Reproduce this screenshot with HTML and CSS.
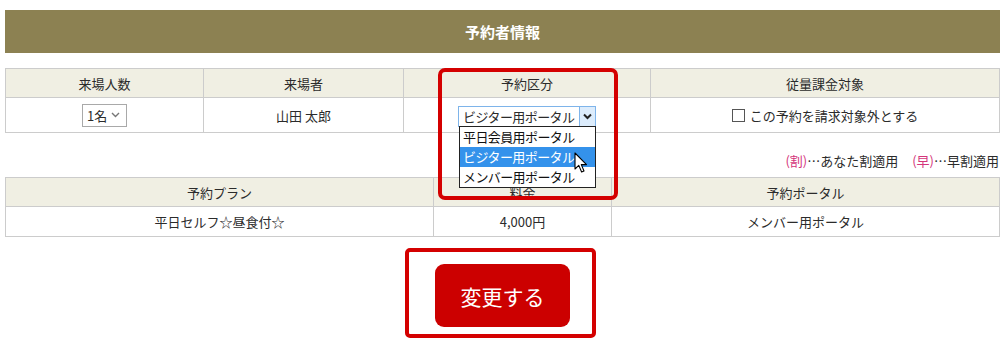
FILE: index.html
```html
<!DOCTYPE html>
<html lang="ja">
<head>
    <meta charset="UTF-8">
    <meta name="viewport" content="width=device-width, initial-scale=1.0">
    <title>予約者情報</title>
    <link rel="stylesheet" href="styles.css">
</head>
<body>
    <div class="page">
        <h2 class="section-title">予約者情報</h2>
        <div class="area">
            <table class="grid info">
                <tr>
                    <th class="c1">来場人数</th>
                    <th class="c2">来場者</th>
                    <th class="c3">予約区分</th>
                    <th>従量課金対象</th>
                </tr>
                <tr class="row-tall">
                    <td><span class="pick small">1名<svg class="chev" width="9" height="6" viewBox="0 0 9 6"><path d="M1 1 L4.5 4.5 L8 1" fill="none" stroke="#777" stroke-width="1.4"/></svg></span></td>
                    <td>山田 太郎</td>
                    <td><span class="pick open"><span class="pick-text">ビジター用ポータル</span><span class="pick-btn"><svg width="9" height="7" viewBox="0 0 9 7"><path d="M1 1.5 L4.5 5 L8 1.5" fill="none" stroke="#222" stroke-width="2"/></svg></span></span></td>
                    <td><span class="check"></span>この予約を請求対象外とする</td>
                </tr>
            </table>
            <p class="legend"><span class="mark-pink">(割)</span>…あなた割適用<span class="gap"></span><span class="mark-pink">(早)</span>…早割適用</p>
            <table class="grid plan">
                <tr>
                    <th class="p1">予約プラン</th>
                    <th class="p2">料金</th>
                    <th>予約ポータル</th>
                </tr>
                <tr>
                    <td>平日セルフ☆昼食付☆</td>
                    <td>4,000円</td>
                    <td>メンバー用ポータル</td>
                </tr>
            </table>

            <ul class="dropdown">
                <li>平日会員用ポータル</li>
                <li class="active">ビジター用ポータル</li>
                <li>メンバー用ポータル</li>
            </ul>
            <svg class="cursor" width="14" height="22" viewBox="0 0 14 22">
                <path d="M1 1 L1 17 L4.8 13.4 L7.6 20 L10 19 L7.3 12.6 L12.5 12.6 Z" fill="#fff" stroke="#000" stroke-width="1.1" stroke-linejoin="round"/>
            </svg>
            <div class="highlight"></div>
        </div>
        <div class="actions">
            <div class="callout">
                <button type="button" class="submit">変更する</button>
            </div>
        </div>
    </div>
</body>
</html>
```

FILE: styles.css
```css
body{
    margin:0;
    background:#fff;
    font-family:"Noto Sans CJK JP", "Noto Sans", sans-serif;
    font-size:13px;
    color:#2b2b2b;
}
.page{
    padding:10px 5px 0 5px;
}
.section-title{
    margin:0;
    height:43px;
    line-height:43px;
    background-color:#8c8152;
    color:#fff;
    font-size:15px;
    font-weight:bold;
    text-align:center;
}
.area{
    position:relative;
    margin-top:15px;
}
.grid{
    width:100%;
    border-collapse:collapse;
    table-layout:fixed;
}
.grid th,
.grid td{
    border:1px solid #ccc;
    text-align:center;
    font-weight:normal;
    padding:0;
    white-space:nowrap;
}
.grid th{
    background-color:#f0efe3;
    height:28px;
}
.grid td{
    height:29px;
}
.info .row-tall td{
    height:34px;
}
.c1{ width:197px; }
.c2{ width:199px; }
.c3{ width:246px; }
.p1{ width:427px; }
.p2{ width:177px; }

.pick{
    display:inline-flex;
    align-items:center;
    box-sizing:border-box;
    vertical-align:middle;
    border:1px solid #a9a9a9;
    background:#fff;
    text-align:left;
}
.pick.small{
    width:45px;
    height:23px;
    padding-left:4px;
    justify-content:space-between;
}
.chev{
    margin-right:6px;
}
.pick.open{
    width:138px;
    height:21px;
    border-color:#7eb4ea;
    margin-top:2px;
}
.pick-text{
    flex:1;
    padding-left:4px;
    line-height:19px;
    letter-spacing:-0.6px;
    white-space:nowrap;
    overflow:hidden;
}
.pick-btn{
    width:15px;
    height:19px;
    border-left:1px solid #7eb4ea;
    background:#dcecfc;
    display:flex;
    align-items:center;
    justify-content:center;
}
.check{
    display:inline-block;
    width:11px;
    height:11px;
    border:1px solid #555;
    vertical-align:-1px;
    margin-right:5px;
}

.legend{
    margin:0;
    padding:19px 1px 8px 0;
    line-height:17px;
    text-align:right;
}
.mark-pink{
    color:#d4367b;
}
.gap{
    display:inline-block;
    width:14px;
}

.dropdown{
    position:absolute;
    left:454px;
    top:58px;
    width:137px;
    margin:0;
    padding:0;
    list-style:none;
    background:#fff;
    border:1px solid #222;
    box-sizing:border-box;
}
.dropdown li{
    height:20px;
    line-height:20px;
    padding-left:3px;
    color:#111;
    letter-spacing:-0.6px;
    white-space:nowrap;
}
.dropdown li.active{
    background-color:#3492eb;
    color:#fff;
}
.cursor{
    position:absolute;
    left:569px;
    top:84px;
}
.highlight{
    position:absolute;
    left:433px;
    top:0;
    width:180px;
    height:132px;
    border:4px solid #d40000;
    border-radius:7px;
    box-sizing:border-box;
}

.actions{
    display:flex;
    justify-content:center;
    padding-top:11px;
}
.callout{
    border:4px solid #d40000;
    border-radius:5px;
    padding:12px 22px 7px 26px;
    margin-right:4px;
}
.submit{
    width:135px;
    height:63px;
    border:none;
    border-radius:9px;
    background-color:#cc0000;
    color:#fff;
    font-family:"Noto Sans CJK JP", sans-serif;
    font-size:21px;
}
```
